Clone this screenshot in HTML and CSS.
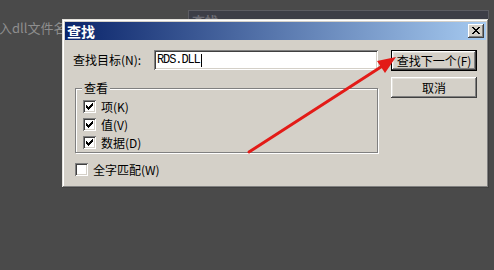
FILE: index.html
```html
<!DOCTYPE html>
<html lang="zh-CN">
<head>
<meta charset="utf-8">
<title>查找</title>
<link rel="stylesheet" href="styles.css">
</head>
<body>
<div class="desktop">
  <div class="bg-text">入dll文件名</div>
  <div class="ghost"><span class="ghost-title">查找</span></div>
  <div class="dialog">
    <div class="titlebar">
      <span class="title">查找</span>
      <span class="close"><svg width="8" height="7" viewBox="0 0 8 7"><path d="M0 0h2v1h1v1h2V1h1V0h2v1H7v1H6v1H5v1h1v1h1v1h1v1H6V6H5V5H3v1H2v1H0V6h1V5h1V4h1V3H2V2H1V1H0z" fill="#000"/></svg></span>
    </div>
    <div class="content">
      <div class="left">
        <div class="row">
          <span class="lbl">查找目标(N):</span>
          <div class="input"><span class="value">RDS.DLL</span><i class="caret"></i></div>
        </div>
        <div class="group">
          <span class="legend">查看</span>
          <div class="check"><span class="box"><svg width="7" height="7" viewBox="0 0 7 7"><path d="M6 0h1v3H6v1H5v1H4v1H3v1H2V6H1V5H0V2h1v1h1v1h1V3h1V2h1V1h1z" fill="#000"/></svg></span><span>项(K)</span></div>
          <div class="check"><span class="box"><svg width="7" height="7" viewBox="0 0 7 7"><path d="M6 0h1v3H6v1H5v1H4v1H3v1H2V6H1V5H0V2h1v1h1v1h1V3h1V2h1V1h1z" fill="#000"/></svg></span><span>值(V)</span></div>
          <div class="check"><span class="box"><svg width="7" height="7" viewBox="0 0 7 7"><path d="M6 0h1v3H6v1H5v1H4v1H3v1H2V6H1V5H0V2h1v1h1v1h1V3h1V2h1V1h1z" fill="#000"/></svg></span><span>数据(D)</span></div>
        </div>
        <div class="check whole"><span class="box"></span><span>全字匹配(W)</span></div>
      </div>
      <div class="right">
        <div class="btn default">查找下一个(F)</div>
        <div class="btn">取消</div>
      </div>
    </div>
  </div>
  <svg class="arrow" width="494" height="270" viewBox="0 0 494 270">
    <line x1="249" y1="152" x2="384" y2="65" stroke="#e31b17" stroke-width="3" stroke-linecap="round"/>
    <polygon points="396,57 377,61 385,73" fill="#e31b17"/>
  </svg>
</div>
</body>
</html>
```
FILE: styles.css
```css
html, body {
  margin: 0;
  padding: 0;
}
body {
  background: #4a4a4a;
  font-family: "Noto Sans CJK SC", "Noto Sans", sans-serif;
  font-size: 12px;
  color: #000;
}
.desktop {
  position: relative;
  width: 494px;
  height: 270px;
  overflow: hidden;
  background: #4a4a4a;
}
.bg-text {
  position: absolute;
  left: -1px;
  top: 19px;
  font-size: 13px;
  line-height: 18px;
  color: #8e8e8e;
}
.ghost {
  position: absolute;
  left: 188px;
  top: 10px;
  width: 301px;
  height: 60px;
  box-sizing: border-box;
  background: #3d3e47;
  border: 1px solid #5c5c62;
  padding: 1px 0 0 3px;
}
.ghost-title {
  font-size: 13px;
  font-weight: bold;
  line-height: 16px;
  color: #6c6c74;
}
.dialog {
  position: absolute;
  left: 62px;
  top: 19px;
  width: 427px;
  height: 169px;
  box-sizing: border-box;
  background: #d4d0c8;
  padding: 3px;
  box-shadow: inset -1px -1px #404040, inset 1px 1px #e4e2dc, inset -2px -2px #808080, inset 2px 2px #ffffff;
  display: flex;
  flex-direction: column;
}
.titlebar {
  height: 18px;
  display: flex;
  align-items: center;
  justify-content: space-between;
  padding: 0 2px;
  background: linear-gradient(to right, #0a246a, #a6caf0);
}
.title {
  color: #fff;
  font-weight: bold;
  font-size: 14px;
  line-height: 18px;
}
.close {
  width: 16px;
  height: 14px;
  box-sizing: border-box;
  background: #d4d0c8;
  box-shadow: inset -1px -1px #404040, inset 1px 1px #ffffff, inset -2px -2px #808080;
  display: flex;
  align-items: center;
  justify-content: center;
  padding: 0 1px 1px 0;
}
.close svg {
  display: block;
}
.content {
  display: flex;
  padding: 10px 0 0 8px;
  gap: 13px;
}
.left {
  width: 305px;
  display: flex;
  flex-direction: column;
}
.row {
  display: flex;
  align-items: center;
  height: 20px;
}
.lbl {
  width: 81px;
  line-height: 20px;
}
.input {
  width: 224px;
  height: 20px;
  box-sizing: border-box;
  background: #fff;
  box-shadow: inset 1px 1px #808080, inset -1px -1px #ffffff, inset 2px 2px #404040, inset -2px -2px #d4d0c8;
  display: flex;
  align-items: center;
  padding: 0 0 0 3px;
}
.value {
  font-family: "Liberation Mono", "DejaVu Sans Mono", monospace;
  font-size: 12px;
  letter-spacing: -1.1px;
  line-height: 14px;
}
.caret {
  display: block;
  width: 1px;
  height: 13px;
  background: #000;
  margin-left: 1px;
}
.group {
  position: relative;
  margin: 18px 0 0 2px;
  width: 303px;
  height: 65px;
  box-sizing: border-box;
  border: 1px solid #808080;
  box-shadow: inset 1px 1px #ffffff, 1px 1px #ffffff;
  padding: 11px 0 0 7px;
  display: flex;
  flex-direction: column;
  gap: 5px;
}
.legend {
  position: absolute;
  left: 6px;
  top: -8px;
  padding: 0 2px;
  background: #d4d0c8;
  line-height: 14px;
}
.check {
  display: flex;
  align-items: center;
  height: 13px;
  gap: 5px;
  line-height: 13px;
}
.box {
  width: 13px;
  height: 13px;
  box-sizing: border-box;
  background: #fff;
  box-shadow: inset 1px 1px #808080, inset -1px -1px #ffffff, inset 2px 2px #404040, inset -2px -2px #d4d0c8;
  display: flex;
  align-items: center;
  justify-content: center;
  flex: none;
}
.box svg {
  display: block;
}
.whole {
  margin: 10px 0 0 2px;
}
.right {
  width: 86px;
  display: flex;
  flex-direction: column;
  gap: 6px;
}
.btn {
  height: 21px;
  box-sizing: border-box;
  background: #d4d0c8;
  box-shadow: inset -1px -1px #404040, inset 1px 1px #ffffff, inset -2px -2px #808080, inset 2px 2px #e4e2dc;
  display: flex;
  align-items: center;
  justify-content: center;
  line-height: 14px;
}
.btn.default {
  border: 1px solid #000;
}
.arrow {
  position: absolute;
  left: 0;
  top: 0;
  pointer-events: none;
}
```
